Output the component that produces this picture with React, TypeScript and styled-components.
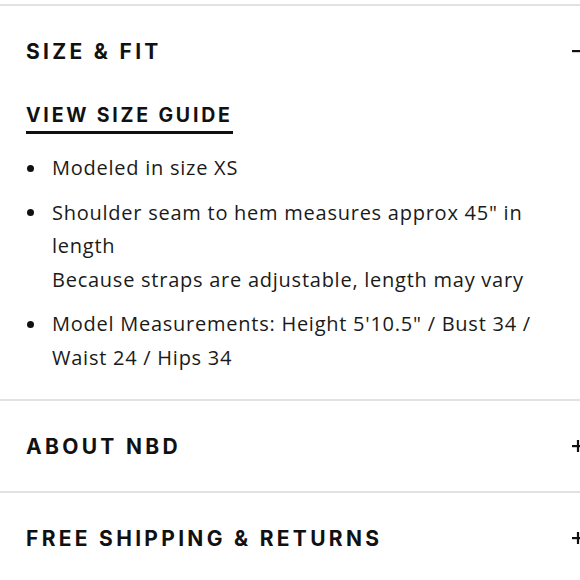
import styled, { createGlobalStyle } from "styled-components";

const GlobalStyle = createGlobalStyle`
	html, body {
		margin: 0;
		padding: 0;
		background: #fff;
		overflow: hidden;
	}
`;

interface SectionData {
	title: string;
	open: boolean;
}

const sections: SectionData[] = [
	{ title: "Size & Fit", open: true },
	{ title: "About NBD", open: false },
	{ title: "Free Shipping & Returns", open: false },
];

function ToggleIcon({ open }: { open: boolean }) {
	return (
		<svg width="12" height="12" viewBox="0 0 12 12">
			<rect x="0" y="5" width="12" height="2.2" fill="#111" />
			{!open && <rect x="4.9" y="0" width="2.2" height="12" fill="#111" />}
		</svg>
	);
}

function SizeFitContent() {
	return (
		<Content>
			<GuideLink href="#">View Size Guide</GuideLink>
			<Details>
				<li>Modeled in size XS</li>
				<li>
					Shoulder seam to hem measures approx 45" in length
					<br />
					Because straps are adjustable, length may vary
				</li>
				<li>Model Measurements: Height 5'10.5" / Bust 34 / Waist 24 / Hips 34</li>
			</Details>
		</Content>
	);
}

export default function App() {
	return (
		<>
			<GlobalStyle />
			<Accordion>
				{sections.map((section) => (
					<Section key={section.title}>
						<Header>
							<Title>{section.title}</Title>
							<ToggleIcon open={section.open} />
						</Header>
						{section.open && <SizeFitContent />}
					</Section>
				))}
			</Accordion>
		</>
	);
}

const Accordion = styled.div`
	width: 610px;
	padding-top: 4px;
	color: #111;
`;

const Section = styled.section`
	border-top: 2px solid #e2e2e2;
`;

const Header = styled.div`
	display: flex;
	align-items: center;
	justify-content: space-between;
	height: 90px;
	padding: 0 26px;
	cursor: pointer;
`;

const Title = styled.h3`
	margin: 0;
	font-family: Inter, "Liberation Sans", sans-serif;
	font-weight: 700;
	font-size: 21px;
	letter-spacing: 3.3px;
	text-transform: uppercase;
`;

const Content = styled.div`
	display: flex;
	flex-direction: column;
	align-items: flex-start;
	padding: 0 21px 25px 26px;
`;

const GuideLink = styled.a`
	font-family: Inter, "Liberation Sans", sans-serif;
	font-weight: 700;
	font-size: 19.5px;
	letter-spacing: 2.8px;
	line-height: 23px;
	text-transform: uppercase;
	color: #111;
	text-decoration: none;
	border-bottom: 3px solid #111;
	padding-bottom: 4px;
	margin-top: 8px;
`;

const Details = styled.ul`
	list-style: none;
	margin: 17px 0 0;
	padding: 0;
	display: flex;
	flex-direction: column;
	gap: 11px;
	font-family: "Open Sans", sans-serif;
	font-size: 20px;
	letter-spacing: 0.75px;
	line-height: 33.5px;
	color: #1a1a1a;

	li {
		position: relative;
		padding-left: 26px;
	}

	li::before {
		content: "";
		position: absolute;
		left: 1px;
		top: 13.5px;
		width: 7px;
		height: 7px;
		border-radius: 50%;
		background: #111;
	}
`;
